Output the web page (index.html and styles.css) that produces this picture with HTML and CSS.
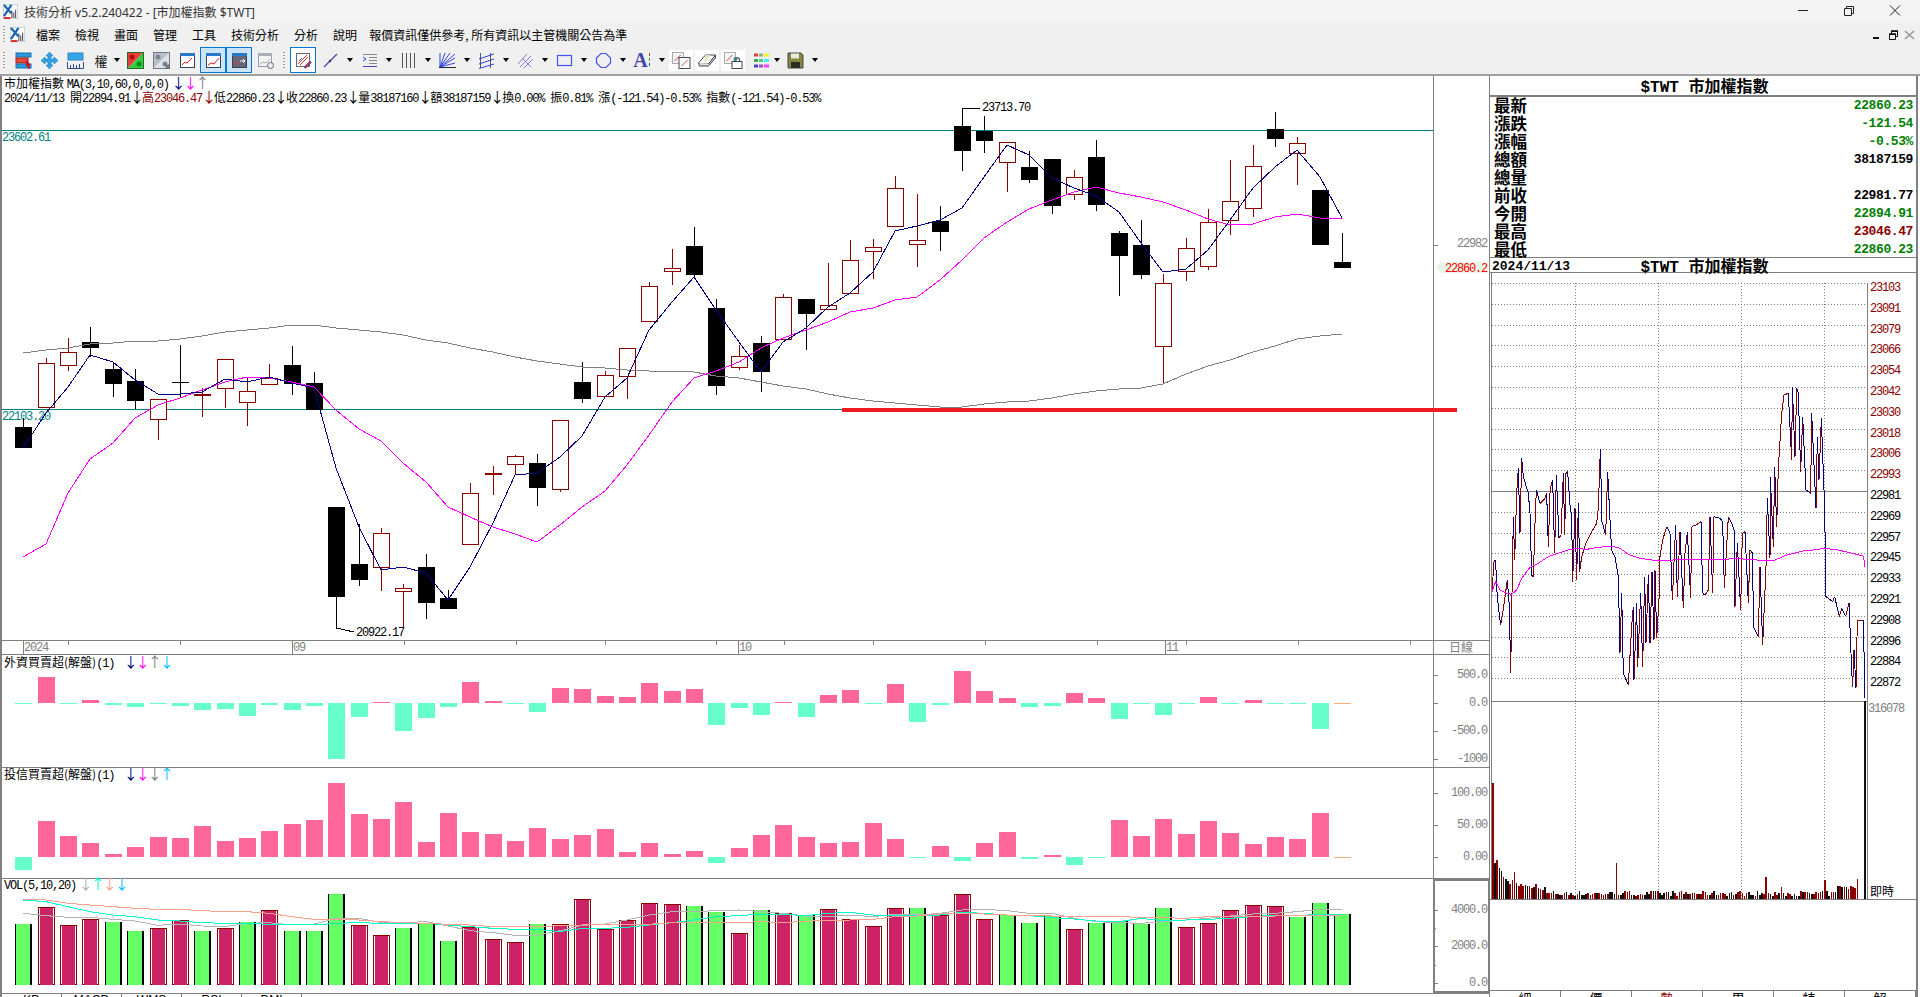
FILE: index.html
```html
<!DOCTYPE html>
<html lang="zh-Hant">

<head>
  <meta charset="UTF-8">
  <meta name="viewport" content="width=device-width, initial-scale=1.0">
  <title>技術分析 v5.2.240422 - [市加權指數 $TWT]</title>
  <link rel="stylesheet" href="styles.css">
</head>

<body>
  <div class="app">
    <header class="titlebar">
      <svg class="app-icon" viewBox="0 0 16 16"><rect width="16" height="16" fill="#fff" stroke="#8aa" /><path d="M1 1l8 9M9 1L1 13" stroke="#1b62b5" stroke-width="2.4" fill="none" /><path d="M9 7h1v8H9zM11 9h1v6h-1zM13 6h1v9h-1z" fill="#334" /><path d="M1 15h7" stroke="#d22" stroke-width="2" /></svg>
      <span class="title-text">技術分析 v5.2.240422 - [市加權指數 $TWT]</span>
      <div class="win-buttons">
        <svg viewBox="0 0 46 23"><path d="M18 10.5h10" stroke="#222" /></svg>
        <svg viewBox="0 0 46 23"><path d="M18.5 8.5h7v7h-7zM20.5 8V6.500h7v7H26" stroke="#222" fill="none" /></svg>
        <svg viewBox="0 0 46 23"><path d="M18 5.500l10 10M28 5.500l-10 10" stroke="#222" fill="none" /></svg>
      </div>
    </header>

    <nav class="menubar">
      <span class="grip"></span>
      <svg class="app-icon" viewBox="0 0 16 16"><rect width="16" height="16" fill="#fff" stroke="#8aa" /><path d="M1 1l8 9M9 1L1 13" stroke="#1b62b5" stroke-width="2.4" fill="none" /><path d="M9 7h1v8H9zM11 9h1v6h-1zM13 6h1v9h-1z" fill="#334" /><path d="M1 15h7" stroke="#d22" stroke-width="2" /></svg>
      <span class="menu-item">檔案</span>
      <span class="menu-item">檢視</span>
      <span class="menu-item">畫面</span>
      <span class="menu-item">管理</span>
      <span class="menu-item">工具</span>
      <span class="menu-item">技術分析</span>
      <span class="menu-item">分析</span>
      <span class="menu-item menu-last">說明</span>
      <span class="menu-item">報價資訊僅供參考, 所有資訊以主管機關公告為準</span>
      <div class="mdi-buttons">
        <svg viewBox="0 0 16 16"><path d="M5 10h6v2H5z" fill="#111" /></svg>
        <svg viewBox="0 0 16 16"><path d="M4.500 7.500h6v5h-6zM6.500 7V4.500h6v5H11" stroke="#111" fill="none" /><path d="M4 7h7M6 4h7" stroke="#111" stroke-width="1.500" /></svg>
        <svg viewBox="0 0 16 16"><path d="M3 4l9 8M12 4l-9 8" stroke="#999" stroke-width="1.600" /></svg>
      </div>
    </nav>

    <div class="toolbar">
      <span class="grip"></span>
      <button class="tool"><svg viewBox="0 0 17 17"><rect x="1" y="1" width="15" height="4" fill="#2b9be0" stroke="#1b6fa8" /><rect x="1" y="6" width="12" height="5" fill="#e24a3a" stroke="#a02020" /><rect x="1" y="12" width="15" height="4" fill="#2b9be0" stroke="#1b6fa8" /><path d="M11 8l5 5-2 .5 1 3-1.500.5-1-3-1.500 1z" fill="#d0102a" /></svg></button>
      <button class="tool"><svg viewBox="0 0 17 17"><path d="M8.500 0l3.500 4h-2v3h3V5l4 3.500-4 3.500v-2h-3v3h2l-3.500 4L5 13h2v-3H4v2L0 8.500 4 5v2h3V4H5z" fill="#2ba3e6" stroke="#1979b8" stroke-width=".6" /></svg></button>
      <button class="tool"><svg viewBox="0 0 17 17"><rect x="1" y="1" width="15" height="7" fill="#36a6e6" stroke="#2d86c4" /><path d="M.500 10v6.500h16V10M3.500 13v3M6.500 12v4M9.500 13v3M12.500 12v4" stroke="#334b88" fill="none" /></svg></button>
      <button class="tool tool-text">權</button>
      <span class="drop drop-tight"></span>
      <button class="tool"><svg viewBox="0 0 17 17"><path d="M.500.500h16L.500 16.500z" fill="#e8403a" /><path d="M16.500.500v16H.500z" fill="#35cc40" /><rect x=".500" y=".500" width="16" height="16" fill="none" stroke="#236b2a" /><circle cx="5" cy="5" r="2.500" fill="#b01010" /><circle cx="12" cy="12" r="2.500" fill="#0a8a20" /></svg></button>
      <button class="tool"><svg viewBox="0 0 17 17"><path d="M.500.500h16L.500 16.500z" fill="#b8c0c8" /><path d="M16.500.500v16H.500z" fill="#dde2e6" /><rect x=".500" y=".500" width="16" height="16" fill="none" stroke="#778" /><circle cx="5" cy="5" r="2.500" fill="#7a8894" /><circle cx="12" cy="12" r="2.500" fill="#7a8894" /><path d="M12 12l5 5M17 12l-5 5" stroke="#667" stroke-width="1.400" /></svg></button>
      <button class="tool"><svg viewBox="0 0 17 17"><rect x="1.500" y="1.500" width="14" height="14" fill="#fff" stroke="#345" /><rect x="1" y="1" width="15" height="3" fill="#2a78c8" /><path d="M3 13l3-3 2 1 5-5" stroke="#d22" fill="none" /></svg></button>
      <button class="tool tool-on"><svg viewBox="0 0 17 17"><rect x="1.500" y="1.500" width="14" height="14" fill="#fff" stroke="#345" /><rect x="1" y="1" width="15" height="3" fill="#2a78c8" /><path d="M3 13l3-2 3 1 5-6" stroke="#c22" fill="none" /></svg></button>
      <button class="tool tool-on"><svg viewBox="0 0 17 17"><rect x="1.500" y="1.500" width="14" height="14" fill="#667" stroke="#345" /><rect x="1" y="1" width="15" height="3" fill="#2a78c8" /><path d="M2 13l3-3 2 1" stroke="#e33" fill="none" /><path d="M9 9h5M12 7l2 2-2 2" stroke="#fff" fill="none" /></svg></button>
      <button class="tool"><svg viewBox="0 0 17 17"><rect x="1.500" y="1.500" width="13" height="13" fill="#f2f3f5" stroke="#99a" /><rect x="1" y="1" width="14" height="3" fill="#a9adb5" /><path d="M3 12l3-2 3 1 4-4" stroke="#aaa" fill="none" /><circle cx="13.500" cy="13.500" r="3" fill="#eee" stroke="#667" /></svg></button>
      <span class="grip grip-mid"></span>
      <button class="tool tool-active"><svg viewBox="0 0 17 17"><rect x="1.500" y="1.500" width="13" height="13" fill="#fff" stroke="#667" /><path d="M3 12L12 3M5 13l8-8" stroke="#d33" fill="none" /><path d="M4 9l3-3" stroke="#36c" /><path d="M9 15l6-6 1.500 1.500-6 6z" fill="#b38" stroke="#534" stroke-width=".6" /></svg></button>
      <button class="tool tool-gap"><svg viewBox="0 0 17 17"><path d="M2 15L15 2" stroke="#4646b0" stroke-width="1.200" /><circle cx="8" cy="9" r="1.200" fill="#334" /></svg></button>
      <span class="drop"></span>
      <button class="tool"><svg viewBox="0 0 17 17"><path d="M2 2.500h14M8 5.500h8M8 8.500h8M8 11.500h8" stroke="#888" /><path d="M2 14.500h14" stroke="#4444cc" /><path d="M2 5l3 2-3 2" stroke="#3344dd" fill="none" /></svg></button>
      <span class="drop"></span>
      <button class="tool"><svg viewBox="0 0 17 17"><path d="M2.500 1v15M6.500 1v15M10.500 1v15M14.500 1v15" stroke="#555" /></svg></button>
      <span class="drop"></span>
      <button class="tool"><svg viewBox="0 0 17 17"><path d="M1 15L16 2M1 15L16 6M1 15l15-4M1 15V1M1 15L6 1M1 15L11 1" stroke="#3344dd" /><path d="M0 15.500h17" stroke="#223" /></svg></button>
      <span class="drop"></span>
      <button class="tool"><svg viewBox="0 0 17 17"><path d="M2.500 1v15M12.500 1v15" stroke="#556" /><path d="M1 7L16 2M1 12L16 7M1 16.500L16 12" stroke="#3344dd" /></svg></button>
      <span class="drop"></span>
      <button class="tool"><svg viewBox="0 0 17 17"><path d="M1 12L10 2M3 15L14 4M7 16L16 7M5 6l9 9" stroke="#7a7ae0" /></svg></button>
      <span class="drop"></span>
      <button class="tool"><svg viewBox="0 0 17 17"><rect x="1.500" y="3.500" width="14" height="10" fill="none" stroke="#4455ee" stroke-width="1.200" /></svg></button>
      <span class="drop"></span>
      <button class="tool"><svg viewBox="0 0 17 17"><path d="M6 1.500h5l4.500 4.500v5L11 15.500H6L1.500 11V6z" fill="none" stroke="#4455ee" stroke-width="1.200" /></svg></button>
      <span class="drop"></span>
      <button class="tool tool-letter">A<svg class="dots" viewBox="0 0 2 17"><path d="M1 1v3" stroke="#c33" /><path d="M1 6v3" stroke="#3a3" /><path d="M1 11v3" stroke="#33c" /></svg></button>
      <span class="drop"></span>
      <button class="tool tool-doc"><svg viewBox="0 0 19 17"><rect x="1" y=".500" width="11" height="11" fill="#f5f5f5" stroke="#aaa" /><path d="M3 9l6-6" stroke="#d44" /><rect x="7.500" y="5.500" width="11" height="11" fill="#fff" stroke="#445" /><path d="M10 14l6-6" stroke="#d44" /></svg></button>
      <button class="tool tool-doc"><svg viewBox="0 0 19 17"><path d="M1 11L8 3h10l-7 9H2z" fill="#fff" stroke="#445" /><path d="M11 12l7-9v3l-7 8H2l-1-3" fill="#ddd" stroke="#445" /><path d="M8 3l5 0-7 9" fill="#e4e2b8" /></svg></button>
      <button class="tool tool-doc"><svg viewBox="0 0 19 17"><rect x="1" y=".500" width="11" height="11" fill="#f5f5f5" stroke="#aaa" /><path d="M3 9l6-6" stroke="#d44" /><path d="M11 9V7a3 3 0 0 1 5 0v2" fill="none" stroke="#446" stroke-width="1.200" /><rect x="8.500" y="9.500" width="10" height="7" fill="#fff" stroke="#445" /><circle cx="12" cy="7" r="2" fill="#3a8a88" /></svg></button>
      <button class="tool tool-colors"><svg viewBox="0 0 17 17"><path d="M1 3h4" stroke="#c44" stroke-width="3" /><path d="M6 3h4" stroke="#9a6" stroke-width="3" /><path d="M11 3h5" stroke="#ee3" stroke-width="3" /><path d="M1 8.500h4" stroke="#4a4" stroke-width="3" /><path d="M6 8.500h4" stroke="#4c8" stroke-width="3" /><path d="M11 8.500h5" stroke="#4ee" stroke-width="3" /><path d="M1 14h4" stroke="#44c" stroke-width="3" /><path d="M6 14h4" stroke="#a4c" stroke-width="3" /><path d="M11 14h5" stroke="#e4e" stroke-width="3" /></svg></button>
      <span class="drop drop-tight"></span>
      <button class="tool"><svg viewBox="0 0 17 17"><path d="M1 1h13l2 2v13H1z" fill="#87863f" stroke="#445" /><rect x="4" y="1.500" width="8" height="5" fill="#e8e8e0" /><rect x="4" y="10" width="9" height="6" fill="#2c2c24" /></svg></button>
      <span class="drop"></span>
    </div>

    <main class="workspace">
      <section class="kchart">
        <div class="pane pane-main">
          <svg id="mainChart"></svg>
          <div class="legend">
            <div class="legend-row">市加權指數 <span class="n">MA(3,10,60,0,0,0)</span> <i class="arrow c-navy">↓</i><i class="arrow c-magenta">↓</i><i class="arrow c-gray">↑</i></div>
            <div class="legend-row"><span class="n">2024/11/13 </span>開<span class="n">22894.91</span><i class="arrow">↓</i><span class="c-red">高<span class="n">23046.47</span><i class="arrow">↓</i></span>低<span class="n">22860.23</span><i class="arrow">↓</i>收<span class="n">22860.23</span><i class="arrow">↓</i>量<span class="n">38187160</span><i class="arrow">↓</i>額<span class="n">38187159</span><i class="arrow">↓</i>換<span class="n">0.00% </span>振<span class="n">0.81% </span>漲<span class="n">(-121.54)-0.53% </span>指數<span class="n">(-121.54)-0.53%</span></div>
          </div>
        </div>
        <div class="pane pane-dates"><svg id="dateAxis"></svg></div>
        <div class="pane pane-foreign">
          <svg id="foreignChart"></svg>
          <div class="legend"><div class="legend-row">外資買賣超(解盤)<span class="n">(1)</span> <span class="legend-arrows"><i class="arrow c-navy">↓</i><i class="arrow c-magenta">↓</i><i class="arrow c-gray">↑</i><i class="arrow c-sky">↓</i></span></div></div>
        </div>
        <div class="pane pane-trust">
          <svg id="trustChart"></svg>
          <div class="legend"><div class="legend-row">投信買賣超(解盤)<span class="n">(1)</span> <span class="legend-arrows"><i class="arrow c-navy">↓</i><i class="arrow c-magenta">↓</i><i class="arrow c-gray">↓</i><i class="arrow c-sky">↑</i></span></div></div>
        </div>
        <div class="pane pane-vol">
          <svg id="volChart"></svg>
          <div class="legend"><div class="legend-row"><span class="n">VOL(5,10,20)</span> <i class="arrow c-silver">↓</i><i class="arrow c-teal">↑</i><i class="arrow c-salmon">↓</i><i class="arrow c-sky">↓</i></div></div>
        </div>
        <div class="tabs-left">
          <span>KD</span><span>MACD</span><span>WMS</span><span>RSI</span><span>DMI</span>
        </div>
        <div class="annot-line"></div>
      </section>

      <aside class="side">
        <div class="side-head">$TWT 市加權指數</div>
        <div class="quotes">
          <div class="quote"><span>最新</span><b class="up-green">22860.23</b></div>
          <div class="quote"><span>漲跌</span><b class="up-green">-121.54</b></div>
          <div class="quote"><span>漲幅</span><b class="up-green">-0.53%</b></div>
          <div class="quote"><span>總額</span><b>38187159</b></div>
          <div class="quote"><span>總量</span><b></b></div>
          <div class="quote"><span>前收</span><b>22981.77</b></div>
          <div class="quote"><span>今開</span><b class="up-green">22894.91</b></div>
          <div class="quote"><span>最高</span><b class="c-red">23046.47</b></div>
          <div class="quote"><span>最低</span><b class="up-green">22860.23</b></div>
        </div>
        <div class="tick-head"><span class="tick-date">2024/11/13</span>$TWT 市加權指數</div>
        <div class="tick-chart"><svg id="tickChart"></svg></div>
        <div class="side-blank"></div>
        <div class="tabs-right">
          <span>細</span><span>價</span><span class="tab-on">勢</span><span>周</span><span>特</span><span>解</span>
        </div>
      </aside>
    </main>
  </div>

  <script src="charts.js"></script>
</body>

</html>
```

FILE: styles.css
```css
* {
  padding: 0;
  margin: 0;
  box-sizing: border-box;
}

body {
  width: 1920px;
  height: 997px;
  overflow: hidden;
  background-color: #f0f0f0;
  color: #000;
  font-family: "Noto Sans", "Noto Sans CJK TC", sans-serif;
  font-size: 12px;
}

.app {
  display: flex;
  flex-direction: column;
  height: 997px;
}

.titlebar {
  height: 23px;
  display: flex;
  align-items: center;
  padding-left: 3px;
  background-color: #f3f3f3;
}

.app-icon {
  width: 15px;
  height: 15px;
  flex: none;
}

.title-text {
  margin-left: 6px;
  color: #333;
}

.win-buttons {
  margin-left: auto;
  display: flex;
  padding-right: 2px;
}

.win-buttons svg {
  width: 46px;
  height: 23px;
}

.menubar {
  height: 23px;
  display: flex;
  align-items: center;
  padding-left: 3px;
}

.grip {
  width: 2px;
  height: 17px;
  flex: none;
  background-image: repeating-linear-gradient(#999 0 1px, transparent 1px 3px);
}

.menubar .app-icon {
  margin-left: 5px;
  margin-right: 11px;
}

.menu-item {
  margin-right: 15px;
  font-family: "Noto Sans CJK TC", sans-serif;
  line-height: 23px;
}

.menu-last {
  margin-right: 12px;
}

.mdi-buttons {
  margin-left: auto;
  display: flex;
  padding-right: 2px;
}

.mdi-buttons svg {
  width: 16px;
  height: 16px;
  margin-left: 1px;
}

.toolbar {
  height: 28px;
  display: flex;
  align-items: center;
  padding-left: 3px;
}

.toolbar > .grip {
  margin-right: 5px;
}

.toolbar > .grip-mid {
  margin: 0 5px;
}

.tool {
  width: 26px;
  height: 26px;
  flex: none;
  display: flex;
  justify-content: center;
  align-items: center;
  border: 1px solid transparent;
  background: none;
}

.tool svg {
  width: 17px;
  height: 17px;
}

.tool-gap {
  margin-left: 1px;
}

.tool-colors {
  margin-left: 2px;
}

.tool-on {
  border: 1px solid #0078d7;
  background-color: #cce4f7;
}

.tool-active {
  border: 1px solid #0078d7;
  background-color: #fff;
}

.tool-text {
  font-family: "Noto Sans CJK TC", sans-serif;
  font-size: 13px;
  color: #222;
}

.tool-letter {
  font-family: "Liberation Serif", serif;
  font-size: 20px;
  font-weight: bold;
  color: #4444a8;
}

.tool-letter .dots {
  width: 3px;
}

.tool-doc svg {
  width: 20px;
  background-color: #fff;
  box-shadow: 0 0 0 2px #fff;
}

.drop {
  width: 13px;
  height: 26px;
  flex: none;
  display: flex;
  justify-content: center;
  align-items: center;
}

.drop::after {
  content: "";
  border-top: 4px solid #000;
  border-left: 3.5px solid transparent;
  border-right: 3.5px solid transparent;
}

.drop-tight {
  width: 11px;
  margin-left: -3px;
}

.workspace {
  flex: 1;
  min-height: 0;
  display: flex;
  border-top: 2px solid #a0a0a0;
  background-color: #fff;
}

.kchart {
  width: 1489px;
  display: flex;
  flex-direction: column;
  position: relative;
  border-left: 2px solid #808080;
}

.pane {
  position: relative;
  flex: none;
  border-bottom: 1px solid #808080;
}

.pane svg,
.tick-chart svg {
  display: block;
  width: 100%;
  height: 100%;
  shape-rendering: crispEdges;
}

.pane-main {
  height: 565px;
}

.pane-dates {
  height: 14px;
}

.pane-foreign {
  height: 113px;
}

.pane-trust {
  height: 111px;
}

.pane-vol {
  height: 115px;
}

.legend {
  position: absolute;
  left: 2px;
  top: 0;
  font-family: "Noto Sans CJK TC", sans-serif;
  white-space: nowrap;
}

.legend-row {
  height: 14px;
  line-height: 14px;
}

.pane-trust .legend {
  top: -1px;
}

.pane-vol .legend {
  top: -2px;
}

.n {
  font-family: "Liberation Mono", monospace;
  letter-spacing: -1.2px;
}

.arrow {
  display: inline-block;
  width: 12px;
  font-family: "Noto Sans CJK TC", sans-serif;
  font-size: 14px;
  line-height: 12px;
  text-align: center;
  font-style: normal;
}

.legend-arrows {
  margin-left: 7px;
}

.c-navy {
  color: #000080;
}

.c-magenta {
  color: #ff00ff;
}

.c-gray {
  color: #808080;
}

.c-sky {
  color: #00bfff;
}

.c-silver {
  color: #b0b0b0;
}

.c-teal {
  color: #00ffcc;
}

.c-salmon {
  color: #ffa08c;
}

.c-red {
  color: #8b0000;
}

.annot-line {
  position: absolute;
  left: 840px;
  top: 332px;
  width: 615px;
  height: 4px;
  background-color: #ed1c24;
}

.tabs-left {
  flex: 1;
  min-height: 0;
  overflow: hidden;
  display: flex;
  font-family: "Liberation Sans", sans-serif;
}

.tabs-left span {
  width: 60px;
  border-right: 1px solid #808080;
  text-align: center;
  line-height: 12px;
}

.side {
  width: 429px;
  display: flex;
  flex-direction: column;
  border-left: 1px solid #808080;
  border-right: 2px solid #808080;
}

.side-head,
.tick-head {
  position: relative;
  text-align: center;
  font-family: "Liberation Mono", "Noto Sans CJK TC", sans-serif;
  font-size: 16px;
  font-weight: bold;
  white-space: nowrap;
}

.side-head {
  height: 20px;
  line-height: 24px;
  padding-left: 3px;
  border-bottom: 1px solid #808080;
}

.quotes {
  height: 162px;
  border-top: 1px solid #808080;
  border-bottom: 1px solid #808080;
}

.quote {
  height: 18px;
  display: flex;
  justify-content: space-between;
  align-items: center;
  padding: 0 3px 0 4px;
  font-family: "Noto Sans CJK TC", sans-serif;
  font-size: 16.5px;
  font-weight: bold;
  line-height: 18px;
}

.quotes .quote:first-child {
  margin-top: -1px;
}

.quote b {
  margin-top: 2px;
  font-family: "Liberation Mono", monospace;
  font-size: 13px;
  letter-spacing: -.4px;
}

.up-green {
  color: #008000;
}

.tick-head {
  height: 15px;
  line-height: 20px;
  padding-left: 3px;
  border-bottom: 1px solid #808080;
}

.tick-date {
  position: absolute;
  left: 2px;
  top: -1px;
  font-size: 13px;
}

.tick-chart {
  height: 627px;
  flex: none;
}

.side-blank {
  flex: 1;
  min-height: 0;
}

.tabs-right {
  height: 7px;
  flex: none;
  overflow: hidden;
  display: flex;
  border-top: 1px solid #808080;
  font-family: "Noto Sans CJK TC", sans-serif;
  font-size: 13px;
}

.tabs-right span {
  width: 71px;
  flex: none;
  text-align: center;
  line-height: 14px;
  border-right: 1px solid #808080;
}

.tabs-right .tab-on {
  color: #8b0000;
  margin-top: -1px;
  border-top: 1px dashed #808080;
}

.k-text {
  font: 12px "Liberation Mono", monospace;
  letter-spacing: -1.2px;
  fill: #000;
}

.axis-text {
  font: 12px "Liberation Mono", monospace;
  letter-spacing: -1.2px;
  fill: #808080;
}

.axis-cjk {
  font: 12px "Noto Sans CJK TC", sans-serif;
  fill: #808080;
}

.teal-text {
  fill: #007f7f;
}

.red-text {
  fill: #ff0000;
}

.darkred-text {
  fill: #8b0000;
}

.black-text {
  fill: #000;
}
```

FILE: charts.js
```js
const NS = 'http://www.w3.org/2000/svg';
const UP = '#8b0000';
const FRAME = '#808080';
const LABEL_END = 1487;
const cx = i => Math.round(23.4 + i * 22.35);

// [wick top, body top, body bottom, wick bottom, kind], page pixels
const candles = [
  [418, 427, 448, 448, 'k'], [358, 363, 407, 407, 'r'], [338, 352, 365, 371, 'r'], [327, 342, 348, 357, 'k'],
  [362, 369, 384, 397, 'k'], [369, 381, 401, 409, 'k'], [399, 399, 419, 440, 'r'], [345, 382, 382, 397, 'k'],
  [388, 394, 394, 417, 'r'], [359, 359, 388, 408, 'r'], [378, 391, 402, 426, 'r'], [364, 378, 384, 385, 'r'],
  [346, 365, 384, 395, 'k'], [372, 383, 410, 410, 'k'], [507, 507, 597, 628, 'k'], [524, 564, 580, 586, 'k'],
  [528, 533, 567, 591, 'r'], [584, 588, 591, 628, 'r'], [554, 567, 603, 619, 'k'], [590, 598, 609, 609, 'k'],
  [483, 493, 544, 544, 'r'], [466, 473, 473, 495, 'r'], [455, 456, 464, 475, 'r'], [454, 463, 488, 506, 'k'],
  [420, 420, 489, 492, 'r'], [362, 382, 399, 403, 'k'], [371, 375, 396, 396, 'r'], [348, 348, 376, 399, 'r'],
  [282, 286, 321, 321, 'r'], [249, 268, 271, 285, 'r'], [227, 246, 275, 277, 'k'], [299, 308, 386, 395, 'k'],
  [345, 356, 367, 370, 'r'], [336, 343, 372, 392, 'k'], [294, 297, 339, 339, 'r'], [299, 299, 314, 350, 'k'],
  [263, 305, 309, 309, 'r'], [240, 260, 293, 293, 'r'], [239, 247, 251, 279, 'r'], [176, 188, 226, 227, 'r'],
  [194, 240, 244, 267, 'r'], [206, 221, 232, 251, 'k'], [109, 126, 151, 171, 'k'], [116, 131, 141, 153, 'k'],
  [142, 142, 162, 192, 'r'], [151, 167, 180, 183, 'k'], [159, 159, 206, 214, 'k'], [170, 177, 194, 200, 'r'],
  [140, 157, 205, 211, 'k'], [231, 233, 256, 296, 'k'], [220, 245, 275, 279, 'k'], [274, 283, 346, 384, 'r'],
  [238, 248, 271, 281, 'r'], [209, 222, 266, 270, 'r'], [160, 201, 220, 235, 'r'], [145, 166, 208, 217, 'r'],
  [112, 129, 139, 147, 'k'], [137, 143, 153, 185, 'r'], [190, 190, 245, 245, 'k'], [233, 262, 268, 268, 'k']
];

const ma3 = [448, 413, 387, 355, 362, 380, 394, 394, 392, 379, 382, 377, 383, 388, 468, 527, 570, 567, 573, 600,
  567, 523, 475, 473, 457, 436, 397, 378, 330, 302, 277, 310, 342, 372, 342, 328, 307, 293, 272, 231,
  226, 220, 208, 177, 145, 155, 178, 188, 196, 212, 243, 272, 269, 250, 220, 188, 167, 150, 177, 218];
const ma10 = [557, 544, 493, 459, 443, 418, 405, 398, 390, 382, 377, 378, 382, 387, 410, 429, 441, 463, 482, 507,
  517, 527, 534, 542, 525, 507, 491, 465, 435, 402, 378, 371, 362, 348, 338, 330, 322, 312, 308, 300,
  297, 280, 260, 238, 222, 209, 200, 192, 187, 193, 197, 202, 210, 219, 225, 224, 217, 214, 218, 219];
const ma60 = [353, 350, 348, 344, 343, 341, 341, 339, 336, 332, 330, 328, 325, 325, 328, 330, 332, 335, 340, 343,
  348, 352, 357, 361, 364, 367, 368, 370, 371, 371, 372, 376, 378, 382, 386, 389, 394, 398, 401, 403,
  405, 407, 407, 404, 402, 401, 398, 394, 391, 389, 388, 384, 374, 366, 360, 352, 346, 339, 336, 334];

const foreign = [-3, 78, -3, 9, -6, -12, -3, -9, -21, -18, -39, -6, -21, -9, -168, -42, 3, -84, -45, -12,
  63, 6, -3, -27, 45, 42, 21, 18, 60, 36, 42, -66, -15, -36, 3, -42, 24, 39, -3, 57,
  -57, -6, 96, 36, 15, -12, -9, 30, 15, -48, -3, -36, -3, 18, -3, 9, -3, -3, -78, 0];
const trust = [-39, 108, 63, 42, 9, 30, 60, 57, 93, 48, 57, 78, 99, 111, 222, 129, 114, 165, 45, 132,
  75, 69, 48, 87, 54, 66, 84, 15, 42, 9, 18, -18, 27, 66, 96, 60, 42, 45, 102, 54,
  -3, 33, -12, 42, 75, -6, 6, -24, -3, 111, 63, 114, 69, 108, 72, 39, 60, 54, 132, 0];

const volTops = [852, 802, 855, 837, 846, 873, 864, 840, 873, 864, 846, 810, 873, 873, 762, 855, 885, 864, 849, 903,
  861, 897, 906, 852, 852, 777, 867, 840, 789, 792, 798, 816, 879, 810, 819, 825, 807, 837, 858, 804,
  804, 825, 762, 837, 825, 849, 828, 867, 849, 843, 852, 804, 861, 849, 810, 795, 798, 831, 789, 822];
const volKinds = 'grrrggrrgrgrgggrrgggrrrgrrrrrrggrgrgrrrrgrrrgggrggggrrrrrggg';
const vol5 = [820, 827, 832, 832, 838, 843, 856, 852, 858, 860, 850, 848, 855, 852, 835, 835, 848, 848, 845, 858,
  872, 878, 886, 886, 872, 856, 852, 840, 825, 815, 815, 812, 810, 815, 820, 828, 830, 825, 830, 823,
  825, 820, 810, 808, 812, 820, 820, 835, 845, 848, 850, 845, 840, 835, 828, 822, 820, 815, 808, 808];
const vol10 = [780, 785, 800, 815, 825, 830, 840, 843, 848, 850, 850, 853, 853, 855, 850, 848, 850, 850, 850, 855,
  860, 865, 868, 868, 875, 865, 865, 862, 855, 848, 840, 830, 827, 822, 823, 827, 820, 817, 825, 828,
  825, 825, 817, 820, 825, 827, 833, 837, 843, 845, 835, 842, 840, 838, 835, 830, 825, 827, 823, 823];
const vol20 = [778, 780, 790, 795, 800, 805, 808, 808, 812, 815, 815, 820, 830, 838, 838, 840, 845, 848, 850, 853,
  855, 860, 860, 860, 857, 855, 853, 853, 853, 848, 848, 848, 848, 845, 848, 844, 840, 840, 838, 830,
  828, 822, 820, 822, 825, 825, 828, 830, 830, 830, 832, 833, 835, 830, 828, 828, 828, 826, 826, 825];

// intraday trace, as [x, y] offsets from (1480, 260) times 3
const tickTrace = [[36, 995], [42, 905], [47, 900], [50, 985], [55, 1040], [62, 1095], [68, 1060], [75, 1010], [82, 960], [88, 1040],
  [92, 1240], [96, 1000], [100, 770], [104, 900], [110, 700], [115, 625], [120, 820], [125, 595], [130, 650], [145, 700],
  [150, 760], [155, 945], [160, 950], [165, 790], [169, 690], [180, 730], [195, 715], [200, 700], [205, 860], [210, 700],
  [214, 670], [218, 660], [224, 880], [229, 645], [237, 835], [243, 825], [250, 640], [254, 825], [258, 640], [263, 635],
  [270, 735], [275, 770], [278, 965], [285, 745], [290, 960], [295, 730], [299, 935], [305, 890], [318, 850], [335, 815],
  [350, 790], [355, 745], [361, 568], [366, 785], [377, 825], [383, 635], [392, 820], [395, 870], [405, 890], [415, 950],
  [420, 1180], [425, 1000], [430, 1240], [445, 1275], [455, 1100], [460, 1040], [462, 1260], [470, 1030], [473, 1220], [482, 1000],
  [488, 1220], [494, 950], [498, 1150], [505, 945], [510, 1150], [516, 935], [522, 1140], [525, 930], [530, 1135], [537, 1020],
  [540, 890], [548, 840], [560, 800], [570, 820], [577, 1020], [587, 795], [592, 1010], [600, 815], [610, 1045], [615, 880],
  [622, 815], [632, 1015], [635, 800], [648, 795], [663, 785], [668, 1000], [675, 1005], [685, 990], [690, 770], [698, 1000],
  [702, 770], [720, 775], [728, 785], [733, 985], [745, 770], [755, 790], [762, 810], [765, 1040], [772, 850], [782, 1050],
  [787, 820], [795, 815], [805, 1030], [810, 870], [818, 880], [820, 1100], [835, 1130], [840, 920], [848, 1155], [858, 920],
  [862, 715], [870, 895], [871, 650], [880, 860], [884, 620], [890, 800], [895, 625], [905, 460], [912, 405], [925, 400],
  [935, 600], [937, 380], [945, 590], [950, 385], [955, 400], [962, 635], [968, 470], [978, 690], [992, 700], [995, 460],
  [1008, 745], [1012, 530], [1017, 660], [1024, 475], [1030, 640], [1034, 735], [1036, 890], [1038, 1010], [1058, 1025], [1064, 1010],
  [1078, 1070], [1085, 1045], [1097, 1068], [1107, 1028], [1115, 1230], [1118, 1280], [1122, 1170], [1128, 1285], [1132, 1080], [1150, 1080], [1155, 1315]];
const tickAvg = [[36, 995], [47, 965], [60, 990], [75, 998], [95, 1003], [110, 990], [125, 955], [150, 922], [175, 910], [205, 890],
  [235, 880], [265, 870], [290, 865], [320, 868], [355, 862], [395, 858], [420, 865], [445, 883], [480, 895], [530, 902],
  [580, 900], [640, 898], [740, 898], [760, 895], [830, 900], [885, 900], [920, 885], [970, 873], [1000, 870], [1035, 865],
  [1075, 870], [1125, 882], [1150, 888], [1155, 920]];
const tickRows = [[68, 23103], [132, 23091], [195, 23079], [256, 23066], [319, 23054], [382, 23042], [445, 23030], [508, 23018], [568, 23006], [631, 22993],
  [694, 22981], [757, 22969], [820, 22957], [880, 22945], [943, 22933], [1006, 22921], [1069, 22908], [1132, 22896], [1192, 22884], [1255, 22872]];

class Plot {
  // the viewBox is the svg's page rectangle, so the data above stays in page pixels
  constructor(id) {
    this.svg = document.getElementById(id);
    const r = this.svg.getBoundingClientRect();
    this.svg.setAttribute('viewBox', `${r.left} ${r.top} ${r.width} ${r.height}`);
  }

  add(tag, attrs, text) {
    const node = document.createElementNS(NS, tag);
    Object.keys(attrs).forEach(key => node.setAttribute(key, attrs[key]));
    if (text !== undefined) node.textContent = text;
    this.svg.appendChild(node);
    return node;
  }

  line(x1, y1, x2, y2, stroke, extra = {}) {
    return this.add('line', { x1, y1, x2, y2, stroke, ...extra });
  }

  rect(x, y, width, height, fill, extra = {}) {
    return this.add('rect', { x, y, width, height, fill, ...extra });
  }

  poly(points, stroke, extra = {}) {
    const d = points.map(p => p.join(',')).join(' ');
    return this.add('polyline', { points: d, stroke, fill: 'none', ...extra });
  }

  label(x, y, text, cls, anchor = 'start') {
    return this.add('text', { x, y, class: cls, 'text-anchor': anchor }, text);
  }

  axisFrame(top, bottom) {
    this.line(1433.5, top, 1433.5, bottom, FRAME);
  }

  ticks(list) {
    list.forEach(([y, text]) => {
      this.line(1433, y + .5, 1438, y + .5, FRAME);
      if (text) this.label(LABEL_END, y + 3, text, 'axis-text', 'end');
    });
  }
}

const series = (values, map = y => y) => values.map((y, i) => [cx(i), map(y)]);

function drawMain() {
  const p = new Plot('mainChart');
  p.axisFrame(76, 640);
  p.line(2, 130.5, 1433, 130.5, '#007f7f');
  p.line(2, 409.5, 1433, 409.5, '#007f7f');
  p.label(2, 141, '23602.61', 'axis-text teal-text');
  p.label(2, 420, '22103.20', 'axis-text teal-text');

  candles.forEach(([wt, bt, bb, wb, kind], i) => {
    const x = cx(i);
    const color = kind === 'k' ? '#000' : UP;
    p.line(x + .5, wt, x + .5, wb, color);
    if (kind === 'k') {
      p.rect(x - 8, bt, 17, Math.max(bb - bt, 1), '#000');
    } else {
      p.rect(x - 7.5, bt + .5, 16, Math.max(bb - bt, 1), '#fff', { stroke: UP });
    }
  });

  p.poly(series(ma60), '#808080');
  p.poly(series(ma10), '#ff00ff');
  p.poly(series(ma3), '#000080');

  // high and low call-outs
  p.poly([[cx(42) + .5, 126], [cx(42) + .5, 109], [968, 108], [980, 108]], '#000');
  p.label(982, 111, '23713.70', 'k-text');
  p.poly([[cx(14) + .5, 628], [345, 630], [354, 632]], '#000');
  p.label(356, 636, '20922.17', 'k-text');

  p.ticks([[245, '']]);
  p.label(LABEL_END, 247, '22982', 'axis-text', 'end');
  p.add('polygon', { points: '1435,267 1441,262 1488,262 1488,273 1441,273', fill: '#e6f5e6' });
  p.label(LABEL_END, 272, '22860.2', 'axis-text red-text', 'end');
}

function drawDates() {
  const p = new Plot('dateAxis');
  p.axisFrame(641, 654);
  [[23, '2024'], [292, '09'], [738, '10'], [1165, '11']].forEach(([x, text]) => {
    p.line(x + .5, 641, x + .5, 654, FRAME);
    p.label(x + 1, 651, text, 'axis-text');
  });
  [68, 180, 404, 516, 605, 716, 784, 873, 985, 1097, 1186, 1298, 1410].forEach(x => {
    p.line(x + .5, 641, x + .5, 645, FRAME);
  });
  p.label(1449, 652, '日線', 'axis-cjk');
}

function drawBars(id, top, bottom, values, zero, ticks) {
  const p = new Plot(id);
  p.axisFrame(top, bottom);
  values.forEach((v, i) => {
    const x = cx(i) - 8;
    if (v === 0) {
      p.rect(x, zero, 17, 1, '#ffb070');
    } else if (v > 0) {
      const h = Math.max(Math.round(v / 3), 1);
      p.rect(x, zero - h, 17, h, '#ff6699');
    } else {
      p.rect(x, zero, 17, Math.max(Math.round(-v / 3), 1), '#66ffcc');
    }
  });
  p.ticks(ticks);
}

function drawVolume() {
  const p = new Plot('volChart');
  const base = 985;
  const toY = z => 640 + z / 3;

  volTops.forEach((z, i) => {
    const x = cx(i) - 8;
    const top = Math.round(toY(z));
    if (volKinds[i] === 'g') {
      p.rect(x, top, 17, base - top, '#66ff66');
      p.rect(x, top, 1, base - top, '#000');
      p.rect(x + 15, top, 2, base - top, '#000');
    } else {
      p.rect(x + .5, top + .5, 16, base - top - 1, '#fff', { stroke: UP });
      p.rect(x + 2, top + 1, 13, base - top - 1, '#cc2266');
    }
  });

  p.poly(series(vol5, toY), '#b4b4b4');
  p.poly(series(vol10, toY), '#00ffcc');
  p.poly(series(vol20, toY), '#ffa08c');

  p.rect(1434, 880, 55, 112, 'none', { stroke: FRAME, 'stroke-width': 2 });
  p.ticks([[910, '4000.0'], [946, '2000.0'], [983, '0.0']]);
  [928, 965].forEach(y => p.line(1433, y + .5, 1436, y + .5, FRAME));
}

function drawTick() {
  const p = new Plot('tickChart');
  const toX = z => 1480 + z / 3;
  const toY = z => 260 + z / 3;
  const left = 1491.5;
  const right = 1867.5;
  const dotted = { 'stroke-dasharray': '1 2' };

  p.line(left, 273, left, 899, FRAME);
  p.line(right, 283, right, 899, FRAME);

  tickRows.forEach(([z, price]) => {
    const y = Math.round(toY(z)) + .5;
    if (price === 22981) {
      p.line(left, y, right, y, FRAME);
    } else {
      p.line(left, y, right, y, FRAME, dotted);
    }
    p.label(1870, y + 7, price, `axis-text ${price > 22981 ? 'darkred-text' : 'black-text'}`);
  });

  [1575.5, 1658.5, 1741.5, 1824.5].forEach(x => p.line(x, 283, x, 899, FRAME, dotted));

  tickTrace.slice(1).forEach(([x, y], i) => {
    const [px, py] = tickTrace[i];
    p.line(toX(px), toY(py), toX(x), toY(y), y > py ? '#000080' : UP);
  });
  p.poly(tickAvg.map(([x, y]) => [toX(x), toY(y)]), '#ff00ff');

  p.line(1492, 701.5, right, 701.5, FRAME);
  p.label(1868, 712, '316078', 'axis-text');
  p.rect(1864, 701, 2, 198, '#111');

  // volume bars: a tall open, then a low noisy run with a few spikes
  const head = [116, 36, 39, 31, 28, 22, 20, 18, 15, 19, 27, 16, 13, 15, 13, 14, 13, 13, 11, 12, 15, 11, 10, 9, 12];
  const spikes = { 57: 36, 126: 22, 133: 12, 153: 19, 168: 20 };
  const redBars = [0, 10, 126, 133, 168];
  let seed = 7;
  const noise = () => (seed = seed * 16807 % 2147483647) / 2147483647;
  for (let n = 0; n < 169; n++) {
    let h = n < head.length ? head[n] : 3 + Math.round(noise() * 5);
    if (n > 158) h = 9 + Math.round(noise() * 5);
    if (spikes[n]) h = spikes[n];
    const red = redBars.includes(n) || noise() > .55;
    p.rect(1492 + n * 2.17, 899 - h, 1.6, h, red ? '#8b0000' : '#111');
  }

  p.line(1490, 899.5, 1917, 899.5, FRAME);
  p.add('text', { x: 1870, y: 896, class: 'axis-cjk black-text' }, '即時');
}

drawMain();
drawDates();
drawBars('foreignChart', 655, 767, foreign, 703, [[675, '500.0'], [703, '0.0'], [731, '-500.0'], [759, '-1000']]);
drawBars('trustChart', 768, 878, trust, 857, [[793, '100.00'], [825, '50.00'], [857, '0.00']]);
drawVolume();
drawTick();
```
